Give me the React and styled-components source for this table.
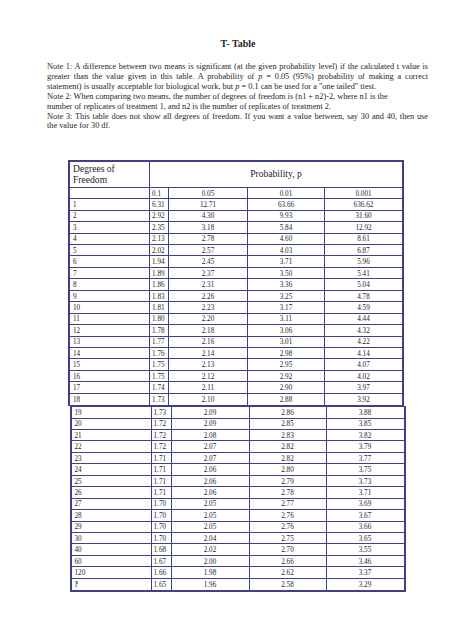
import React from 'react';
import styled, { createGlobalStyle } from 'styled-components';

const GlobalStyle = createGlobalStyle`
    body {
        margin: 0;
        background: #ffffff;
        font-family: "Liberation Serif", "Times New Roman", serif;
        color: #262626;
    }
`;

const Page = styled.div`
    width: 474px;
    height: 632px;
    padding-top: 38px;
    box-sizing: border-box;
    overflow: hidden;
`;

const Title = styled.h1`
    margin: 0;
    font-size: 10px;
    line-height: 12px;
    font-weight: bold;
    text-align: center;
    padding-left: 2px;
`;

const Notes = styled.div`
    margin: 12px 0 0 47px;
    width: 381px;
    font-size: 8.3px;
    line-height: 9.9px;
`;

const Line = styled.div`
    text-align: ${(p) => (p.$justify ? 'justify' : 'left')};
    text-align-last: ${(p) => (p.$justify ? 'justify' : 'left')};
    white-space: ${(p) => (p.$justify ? 'normal' : 'nowrap')};
`;

const Sheet = styled.div`
    display: grid;
    grid-template-columns: ${(p) => p.$cols};
    grid-template-rows: ${(p) => p.$rows};
    grid-auto-rows: 11.45px;
    width: max-content;
    margin-left: ${(p) => p.$left}px;
    margin-top: ${(p) => p.$top}px;
    border: 2px solid #40408a;
    border-top-width: ${(p) => p.$topBorder}px;
    border-bottom-width: ${(p) => p.$bottomBorder}px;
`;

const HeadCell = styled.div`
    grid-column: ${(p) => p.$span};
    font-size: 9.6px;
    line-height: 10.5px;
    border-right: ${(p) => (p.$last ? 'none' : '1px solid #40408a')};
    border-bottom: 1px solid #40408a;
    display: flex;
    align-items: ${(p) => (p.$center ? 'center' : 'flex-start')};
    justify-content: ${(p) => (p.$center ? 'center' : 'flex-start')};
    padding: ${(p) => (p.$center ? '0 0 1px 0' : '2px 0 0 3px')};
`;

const Cell = styled.div`
    font-family: "Liberation Serif", "Times New Roman", serif;
    font-size: 7.2px;
    color: #1e1e1e;
    display: flex;
    align-items: center;
    padding-top: 1px;
    justify-content: ${(p) => (p.$align === 'left' ? 'flex-start' : 'center')};
    padding-left: ${(p) => (p.$align === 'left' ? p.$pad : 0)}px;
    border-right: ${(p) => (p.$last ? 'none' : '1px solid #40408a')};
    border-bottom: ${(p) => (p.$lastRow ? 'none' : '1px solid #40408a')};
    font-weight: ${(p) => (p.$bold ? 'bold' : 'normal')};
`;

const upper = [
    ['1', '6.31', '12.71', '63.66', '636.62'],
    ['2', '2.92', '4.30', '9.93', '31.60'],
    ['3', '2.35', '3.18', '5.84', '12.92'],
    ['4', '2.13', '2.78', '4.60', '8.61'],
    ['5', '2.02', '2.57', '4.03', '6.87'],
    ['6', '1.94', '2.45', '3.71', '5.96'],
    ['7', '1.89', '2.37', '3.50', '5.41'],
    ['8', '1.86', '2.31', '3.36', '5.04'],
    ['9', '1.83', '2.26', '3.25', '4.78'],
    ['10', '1.81', '2.23', '3.17', '4.59'],
    ['11', '1.80', '2.20', '3.11', '4.44'],
    ['12', '1.78', '2.18', '3.06', '4.32'],
    ['13', '1.77', '2.16', '3.01', '4.22'],
    ['14', '1.76', '2.14', '2.98', '4.14'],
    ['15', '1.75', '2.13', '2.95', '4.07'],
    ['16', '1.75', '2.12', '2.92', '4.02'],
    ['17', '1.74', '2.11', '2.90', '3.97'],
    ['18', '1.73', '2.10', '2.88', '3.92'],
];

const lower = [
    ['19', '1.73', '2.09', '2.86', '3.88'],
    ['20', '1.72', '2.09', '2.85', '3.85'],
    ['21', '1.72', '2.08', '2.83', '3.82'],
    ['22', '1.72', '2.07', '2.82', '3.79'],
    ['23', '1.71', '2.07', '2.82', '3.77'],
    ['24', '1.71', '2.06', '2.80', '3.75'],
    ['25', '1.71', '2.06', '2.79', '3.73'],
    ['26', '1.71', '2.06', '2.78', '3.71'],
    ['27', '1.70', '2.05', '2.77', '3.69'],
    ['28', '1.70', '2.05', '2.76', '3.67'],
    ['29', '1.70', '2.05', '2.76', '3.66'],
    ['30', '1.70', '2.04', '2.75', '3.65'],
    ['40', '1.68', '2.02', '2.70', '3.55'],
    ['60', '1.67', '2.00', '2.66', '3.46'],
    ['120', '1.66', '1.98', '2.62', '3.37'],
    ['?', '1.65', '1.96', '2.58', '3.29'],
];

const Row = ({ values, lastRow }) =>
    values.map((v, i) => (
        <Cell
            key={i}
            $align={i < 2 ? 'left' : 'center'}
            $pad={i === 0 ? 3 : 2}
            $last={i === 4}
            $lastRow={lastRow}
            $bold={v === '?'}
        >
            {v}
        </Cell>
    ));

export default () => (
    <Page>
        <GlobalStyle />
        <Title>T- Table</Title>

        <Notes>
            <Line $justify>
                Note 1: A difference between two means is significant (at the given probability level) if the calculated t value is
            </Line>
            <Line $justify>
                greater than the value given in this table. A probability of <i>p</i> = 0.05 (95%) probability of making a correct
            </Line>
            <Line>
                statement) is usually acceptable for biological work, but <i>p</i> = 0.1 can be used for a "one tailed" ttest.
            </Line>
            <Line>Note 2: When comparing two means, the number of degrees of freedom is (n1 + n2)-2, where n1 is the</Line>
            <Line>number of replicates of treatment 1, and n2 is the number of replicates of treatment 2.</Line>
            <Line $justify>
                Note 3: This table does not show all degrees of freedom. If you want a value between, say 30 and 40, then use
            </Line>
            <Line>the value for 30 df.</Line>
        </Notes>

        <Sheet
            $cols='80px 19px 79px 77px 77px'
            $rows='25.5px'
            $left={68}
            $top={29}
            $topBorder={2}
            $bottomBorder={1.5}
        >
            <HeadCell $span='1'>
                Degrees of
                <br />
                Freedom
            </HeadCell>
            <HeadCell $span='2 / 6' $center $last>
                Probability, p
            </HeadCell>
            <Row values={['', '0.1', '0.05', '0.01', '0.001']} />
            {upper.map((r, i) => (
                <Row key={i} values={r} lastRow={i === upper.length - 1} />
            ))}
        </Sheet>

        <Sheet
            $cols='80px 20px 78px 77px 77px'
            $rows='11.45px'
            $left={69.5}
            $top={0}
            $topBorder={1}
            $bottomBorder={2}
        >
            {lower.map((r, i) => (
                <Row key={i} values={r} lastRow={i === lower.length - 1} />
            ))}
        </Sheet>
    </Page>
);
